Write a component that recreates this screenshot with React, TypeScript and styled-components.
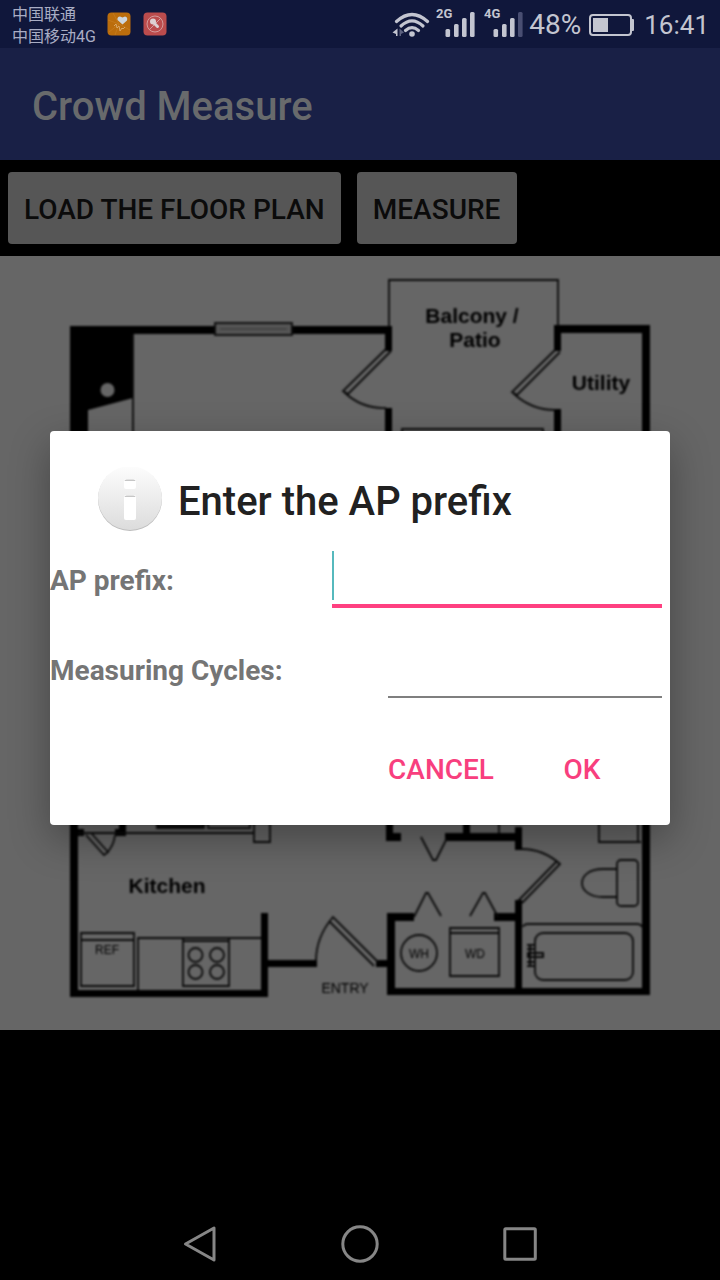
import React from "react";
import styled, { createGlobalStyle, css } from "styled-components";

const GlobalStyle = createGlobalStyle`
  * { box-sizing: border-box; }
  body {
    margin: 0;
    background: #000;
    font-family: Roboto, "Noto Sans CJK SC", sans-serif;
  }
  button, input {
    font-family: inherit;
    margin: 0;
    border: 0;
    border-radius: 0;
    background: none;
    outline: none;
  }
`;

const Screen = styled.div`
  position: relative;
  display: flex;
  flex-direction: column;
  min-height: 100vh;
  background: #000;
`;

const StatusBar = styled.header`
  display: flex;
  align-items: center;
  height: 48px;
  padding: 0 11px 0 12px;
  background: #10173b;
  color: #c3c5d0;
`;

const Carriers = styled.div`
  display: flex;
  flex-direction: column;
  margin-right: 11px;
  padding-top: 4px;
  font-size: 16px;
  line-height: 22px;
  color: #a9adc4;
`;

const NotificationIcons = styled.div`
  display: flex;
  gap: 12px;
`;

const StatusIcons = styled.div`
  display: flex;
  align-items: center;
  margin-left: auto;
`;

const StatusGlyph = styled.svg<{ $gap: number }>`
  display: block;
  margin-right: ${(p) => p.$gap}px;
`;

const StatusText = styled.span<{ $gap?: number; $size: number }>`
  font-size: ${(p) => p.$size}px;
  line-height: 32px;
  padding-top: 2px;
  margin-right: ${(p) => p.$gap ?? 0}px;
`;

const AppBar = styled.div`
  display: flex;
  align-items: center;
  height: 112px;
  padding: 6px 32px 0;
  background: #192046;
`;

const AppTitle = styled.h1`
  margin: 0;
  font-size: 40px;
  font-weight: 500;
  line-height: 48px;
  color: #686a6c;
`;

const Toolbar = styled.div`
  display: flex;
  gap: 16px;
  padding: 12px 8px;
`;

const RaisedButton = styled.button`
  height: 72px;
  min-width: 160px;
  padding: 4px 16px 0;
  border-radius: 4px;
  background: #565656;
  color: #0b0b0b;
  font-size: 28px;
  font-weight: 500;
  line-height: 32px;
`;

const Plan = styled.svg`
  display: block;
  width: 100%;
  height: auto;
  background: #666;
`;

const NavBar = styled.nav`
  display: flex;
  justify-content: center;
  margin-top: auto;
  height: 72px;
`;

const NavButton = styled.button`
  display: flex;
  align-items: center;
  justify-content: center;
  width: 160px;
  padding: 0;
`;

const Overlay = styled.div`
  position: absolute;
  inset: 0;
  display: flex;
  align-items: center;
  padding: 48px 50px 72px;
`;

const Dialog = styled.form`
  flex: 1;
  border-radius: 4px;
  background: #fff;
  box-shadow: 0 14px 40px rgba(0, 0, 0, 0.32);
`;

const DialogHeader = styled.div`
  display: flex;
  align-items: center;
  gap: 16px;
  padding: 36px 48px 4px;
`;

const DialogTitle = styled.h2`
  margin: 0;
  padding-top: 6px;
  font-size: 40px;
  font-weight: 500;
  line-height: 48px;
  color: #212121;
`;

const FieldRow = styled.div<{ $columns: string }>`
  display: grid;
  grid-template-columns: ${(p) => p.$columns};
  align-items: center;
  height: 90px;
`;

const FieldLabel = styled.label`
  padding-top: 2px;
  font-size: 28px;
  font-weight: 700;
  line-height: 32px;
  color: #757575;
`;

const FieldBox = styled.div<{ $focused?: boolean }>`
  position: relative;
  display: flex;
  min-width: 0;
  margin: 0 8px 2px 0;
  ${(p) =>
    p.$focused &&
    css`
      &::before {
        content: "";
        position: absolute;
        left: 0;
        top: 0;
        width: 2px;
        height: 49px;
        background: #56b9bd;
      }
    `}
`;

const TextInput = styled.input<{ $focused?: boolean }>`
  width: 100%;
  min-width: 0;
  height: 57px;
  padding: 0 4px;
  font-size: 36px;
  color: #212121;
  caret-color: transparent;
  border-bottom: ${(p) => (p.$focused ? "4px solid #ff4081" : "2px solid #7f7f7f")};
`;

const DialogActions = styled.div`
  display: flex;
  justify-content: flex-end;
  align-items: center;
  height: 110px;
`;

const FlatButton = styled.button<{ $wide?: boolean }>`
  height: 72px;
  padding: 0;
  width: ${(p) => (p.$wide ? "176px" : "auto")};
  color: #f83f7e;
  font-size: 28px;
  font-weight: 500;
  line-height: 32px;
`;

function Signal({ label, weakLast, gap }: { label: string; weakLast?: boolean; gap: number }) {
  return (
    <StatusGlyph $gap={gap} width="40" height="48" viewBox="0 -8 40 48" fill="#c3c5d0">
      <text x="0" y="10" fontSize="13" fontWeight="700" fontFamily="Roboto, sans-serif">
        {label}
      </text>
      <rect x="9.500" y="21" width="4.600" height="8" rx="1.500" />
      <rect x="18" y="16" width="4.600" height="13" rx="1.500" />
      <rect x="26" y="10" width="4.600" height="19" rx="1.500" />
      <rect x="34" y="4" width="4.600" height="25" rx="1.500" fill={weakLast ? "#494e72" : "#c3c5d0"} />
    </StatusGlyph>
  );
}

function WifiGlyph() {
  return (
    <StatusGlyph $gap={6} width="38" height="32" viewBox="0 0 38 32" fill="none" stroke="#c3c5d0">
      <path d="M4.500 13.500Q20 -0.500 35.500 13.500" strokeWidth="3.200" strokeLinecap="round" />
      <path d="M9 18Q20 7.800 31 18" strokeWidth="3.200" strokeLinecap="round" />
      <path d="M13.500 22.500Q20 16.800 26.500 22.500" strokeWidth="3.200" strokeLinecap="round" />
      <circle cx="20" cy="26" r="2.800" fill="#c3c5d0" stroke="none" />
      <path d="M0.500 24.500L5.500 20.500V28H4V26Z" fill="#c3c5d0" stroke="none" />
      <path d="M12 24.500L7.500 20.500V28H9V26Z" fill="#5d6280" stroke="none" />
    </StatusGlyph>
  );
}

function BatteryGlyph() {
  return (
    <StatusGlyph $gap={9} width="46" height="24" viewBox="0 0 46 24">
      <rect x="1" y="3" width="41" height="20" rx="3" fill="none" stroke="#c3c5d0" strokeWidth="2" />
      <rect x="4" y="6" width="15" height="14" fill="#c3c5d0" />
      <path d="M43 7h1q1 0 1 1v10q0 1-1 1h-1z" fill="#c3c5d0" />
    </StatusGlyph>
  );
}

function FloorPlan() {
  return (
    <Plan viewBox="0 256 720 774" role="img" aria-label="Floor plan">
      <defs>
        <filter id="soft" x="-5%" y="-5%" width="110%" height="110%" colorInterpolationFilters="sRGB">
          <feGaussianBlur stdDeviation="0.8" />
        </filter>
      </defs>
      <g filter="url(#soft)">
        {/* solid walls */}
        <g fill="#000">
          <path d="M70 326H215V334H133V398L88 410V440H70Z" />
          <path d="M292 326H392V351H385V334H292Z" />
          <rect x="385" y="408" width="7" height="30" />
          <path d="M554 325H650V995H387V913H414V921H395V988H515V900H522V988H642V333H561V351H554Z" />
          <rect x="554" y="409" width="7" height="30" />
          <path d="M70 800H78V829H84V836H78V990H261V913H268V960H317V967H268V997H70Z" />
          <path d="M119 820H126V836H115V829H119Z" />
          <path d="M376 960H388V967H376Z" />
          <path d="M386 820H393V833H401V841H386Z" />
          <path d="M445 833H463V820H470V833H515V827H522V850H515V841H445Z" />
          <rect x="494" y="913" width="24" height="8" />
        </g>
        <circle cx="107.500" cy="390" r="7" fill="#666" />
        {/* thin outlines, doors and fixtures */}
        <g fill="none" stroke="#0a0a0a" strokeWidth="1.800">
          <path d="M133 334V440M389 327V280H558V326" />
          <rect x="215" y="323" width="77" height="12" fill="#555" />
          <path d="M220 329H287" stroke="#444" />
          <path d="M386 349L343 391L348 394L391 351M344 392Q362 409 386 408" />
          <path d="M555 350L512 392L517 395L560 352M513 393Q531 410 555 410" />
          <path d="M402 436V429H543V436" />
          <path d="M78 833H254M86 835L104 855L108 852L92 834M107 853Q114 845 115 835" />
          <path d="M157 820V828H204V820M208 820V828H250V820M254 820V842H270V820" />
          <path d="M157 826H204" strokeWidth="3" />
          <path d="M81 933H134V986H81ZM81 940H134M138 990V938H261" />
          <path d="M183 938H229V986H183ZM183 941H229" />
          <circle cx="195.500" cy="955" r="7" />
          <circle cx="217" cy="955" r="7" />
          <circle cx="195.500" cy="972" r="7" />
          <circle cx="217" cy="972" r="7" />
          <path d="M316 961Q316 937 333 917L379 963M329 921L374 966" />
          <path d="M421 837L433 860H436L447 838M499 820V833" />
          <path d="M414 917L426 893H428L441 916M470 916L483 893H485L498 917" />
          <circle cx="419" cy="953" r="18" />
          <path d="M450 928H499V976H450ZM450 933H499" />
          <path d="M522 849Q543 849 560 864L522 903M557 861L518 901" />
          <path d="M599 820V842H641M638 820V842" />
          <rect x="617" y="860" width="21" height="46" rx="4" />
          <path d="M617 869H603C575 869 575 897 603 897H617" />
          <path d="M523 927Q524 924 528 924H637Q641 924 642 927" />
          <rect x="535" y="933" width="98" height="47" rx="8" />
        </g>
        <path
          d="M527 945H534M527 949H534M530 945V966M527 962H534M527 966H534M528 953H543V957H528Z"
          fill="none"
          stroke="#0a0a0a"
          strokeWidth="2"
        />
        <g fill="#000" fontFamily="'Liberation Sans', Arial, sans-serif" textAnchor="middle">
          <g fontSize="21" fontWeight="700">
            <text x="472" y="323">Balcony /</text>
            <text x="475" y="347">Patio</text>
            <text x="601" y="390">Utility</text>
            <text x="167" y="893">Kitchen</text>
          </g>
          <text x="345" y="993" fontSize="14">ENTRY</text>
          <g fontSize="12">
            <text x="107" y="954">REF</text>
            <text x="419" y="958">WH</text>
            <text x="475" y="958">WD</text>
          </g>
        </g>
      </g>
    </Plan>
  );
}

function InfoIcon() {
  return (
    <svg width="64" height="64" viewBox="0 0 64 64" aria-hidden="true">
      <defs>
        <linearGradient id="disc" x1="0" y1="0" x2="0" y2="1">
          <stop offset="0" stopColor="#fdfdfd" />
          <stop offset="1" stopColor="#dcdcdc" />
        </linearGradient>
      </defs>
      <circle cx="32" cy="32" r="32" fill="#bdbdbd" />
      <circle cx="32" cy="31" r="32" fill="url(#disc)" />
      <rect x="26" y="12" width="12" height="10" rx="2" fill="#fff" />
      <path d="M26.500 14q0-1.500 2-1.500h7q2 0 2 1.500z" fill="#c6c6c6" />
      <rect x="26" y="28" width="12" height="25" rx="2" fill="#fff" />
      <path d="M26.500 30q0-1.500 2-1.500h7q2 0 2 1.500z" fill="#c6c6c6" />
    </svg>
  );
}

export default function App() {
  return (
    <>
      <GlobalStyle />
      <Screen>
        <StatusBar>
          <Carriers>
            <span>中国联通</span>
            <span>中国移动4G</span>
          </Carriers>
          <NotificationIcons>
            <svg width="24" height="24" viewBox="0 0 24 24" aria-hidden="true">
              <rect x="0.500" y="0.500" width="23" height="23" rx="4" fill="#bb6d0c" />
              <path d="M12 12L1 8M12 12L2 20M12 12L8 23M12 12L23 18M12 12L6 1" stroke="#c4791a" />
              <path d="M15.500 12.500L10.500 8Q10 4.500 13 4.500L15.500 5.500L18 4.500Q21 5 20 8.500Z" fill="#cdd5dc" />
              <path d="M7 14l2-2 1 4 2-2 1 5 2-3 1 1 2-2" fill="none" stroke="#d9a868" />
            </svg>
            <svg width="24" height="24" viewBox="0 0 24 24" aria-hidden="true">
              <rect x="0.500" y="0.500" width="23" height="23" rx="4" fill="#bb4c4d" />
              <circle cx="12" cy="12" r="8" fill="none" stroke="#d49b9b" />
              <path d="M6 18L18 6" stroke="#d49b9b" />
              <path d="M10 10L14.500 14.500" stroke="#ddd0d2" strokeWidth="3" strokeLinecap="round" />
              <circle cx="10" cy="9.500" r="3" fill="#ddd0d2" />
            </svg>
          </NotificationIcons>
          <StatusIcons>
            <WifiGlyph />
            <Signal label="2G" gap={8} />
            <Signal label="4G" weakLast gap={5} />
            <StatusText $size={28} $gap={8}>48%</StatusText>
            <BatteryGlyph />
            <StatusText $size={26}>16:41</StatusText>
          </StatusIcons>
        </StatusBar>

        <AppBar>
          <AppTitle>Crowd Measure</AppTitle>
        </AppBar>

        <Toolbar>
          <RaisedButton type="button">LOAD THE FLOOR PLAN</RaisedButton>
          <RaisedButton type="button">MEASURE</RaisedButton>
        </Toolbar>

        <FloorPlan />

        <NavBar>
          <NavButton type="button" aria-label="Back">
            <svg width="40" height="40" viewBox="0 0 40 40" fill="none" stroke="#868686" strokeWidth="3" strokeLinejoin="round">
              <path d="M5.500 20L34 4V36Z" />
            </svg>
          </NavButton>
          <NavButton type="button" aria-label="Home">
            <svg width="40" height="40" viewBox="0 0 40 40" fill="none" stroke="#868686" strokeWidth="3">
              <circle cx="20" cy="20" r="17.200" />
            </svg>
          </NavButton>
          <NavButton type="button" aria-label="Recent apps">
            <svg width="40" height="40" viewBox="0 0 40 40" fill="none" stroke="#868686" strokeWidth="3">
              <rect x="4.800" y="4.800" width="30.500" height="30.500" rx="1" />
            </svg>
          </NavButton>
        </NavBar>

        <Overlay>
          <Dialog role="dialog" aria-labelledby="dialog-title" onSubmit={(e) => e.preventDefault()}>
            <DialogHeader>
              <InfoIcon />
              <DialogTitle id="dialog-title">Enter the AP prefix</DialogTitle>
            </DialogHeader>
            <FieldRow $columns="5fr 6fr">
              <FieldLabel htmlFor="ap-prefix">AP prefix:</FieldLabel>
              <FieldBox $focused>
                <TextInput $focused id="ap-prefix" type="text" />
              </FieldBox>
            </FieldRow>
            <FieldRow $columns="6fr 5fr">
              <FieldLabel htmlFor="cycles">Measuring Cycles:</FieldLabel>
              <FieldBox>
                <TextInput id="cycles" type="text" inputMode="numeric" />
              </FieldBox>
            </FieldRow>
            <DialogActions>
              <FlatButton type="button">CANCEL</FlatButton>
              <FlatButton type="submit" $wide>OK</FlatButton>
            </DialogActions>
          </Dialog>
        </Overlay>
      </Screen>
    </>
  );
}
